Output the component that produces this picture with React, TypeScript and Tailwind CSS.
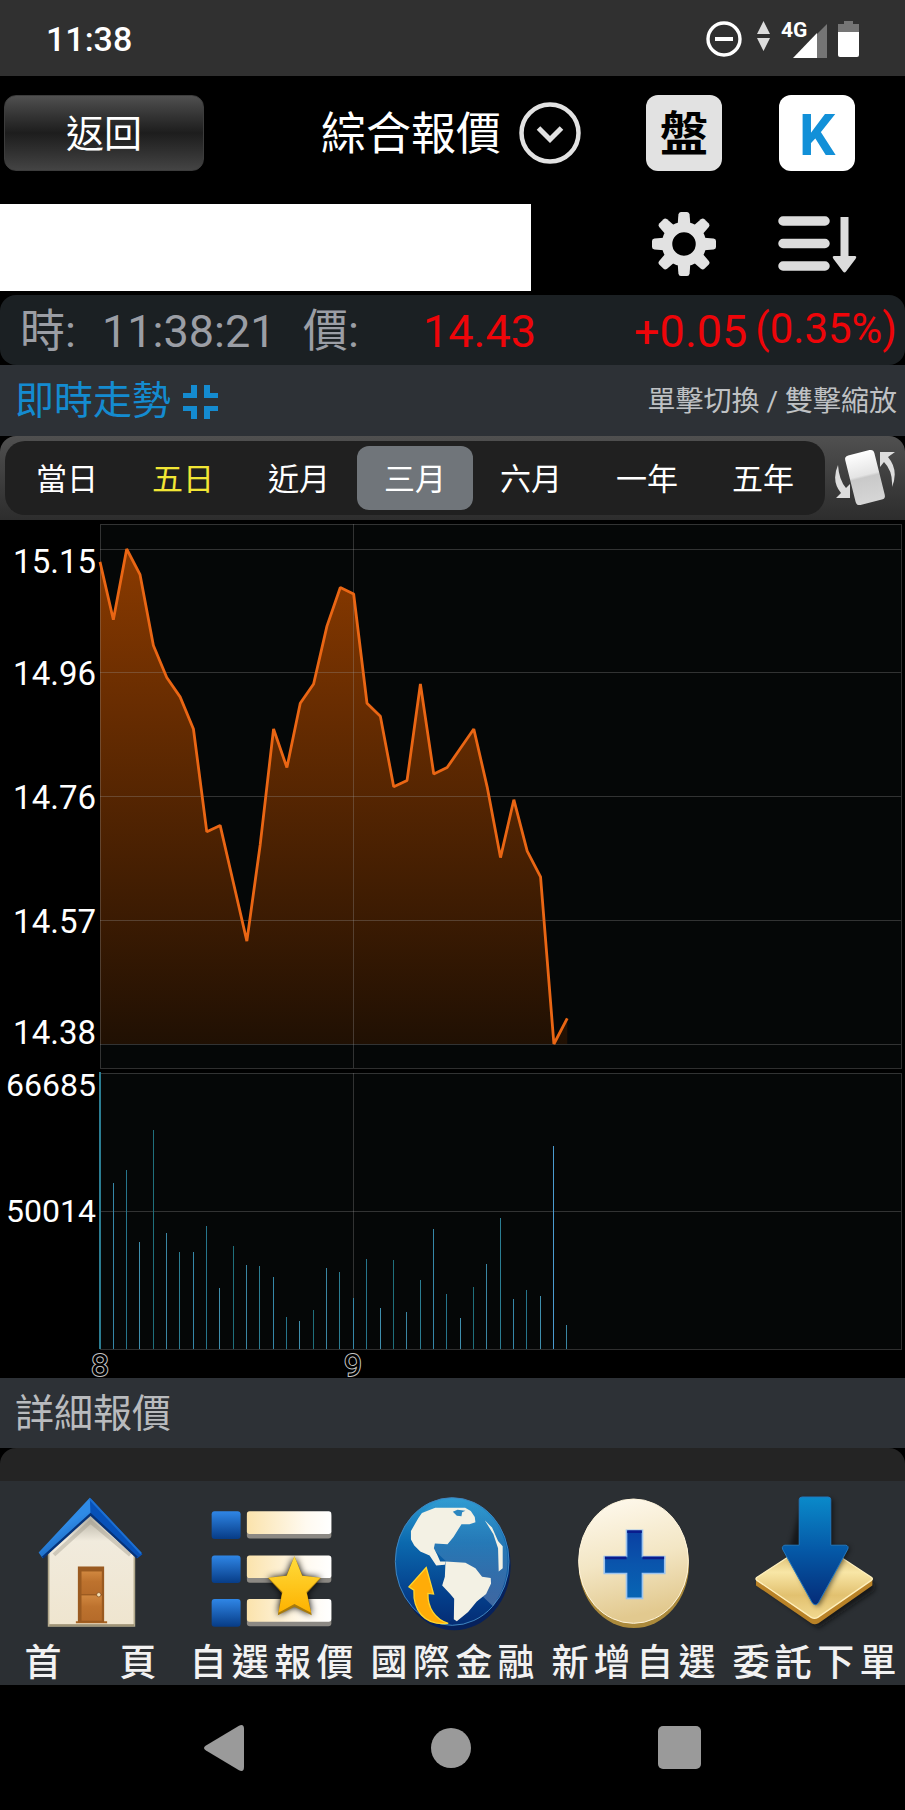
import { useState } from "react";

const PRICES = [
  15.13, 15.04, 15.15, 15.11, 15.0, 14.95, 14.92, 14.87, 14.71, 14.72, 14.63, 14.54,
  14.69, 14.87, 14.81, 14.91, 14.94, 15.03, 15.09, 15.08, 14.91, 14.89, 14.78, 14.79,
  14.94, 14.8, 14.81, 14.84, 14.87, 14.78, 14.67, 14.76, 14.68, 14.64, 14.38, 14.42,
];

// Bar heights above the volume baseline, in chart units.
const VOLUMES = [
  277, 166, 179, 107, 219, 116, 97, 97, 123, 61, 103, 84, 83, 72, 32, 28, 39, 81, 77, 51,
  90, 41, 89, 37, 69, 120, 55, 31, 62, 85, 131, 50, 59, 53, 203, 24,
];

const BAR_COLORS = ["#2b7d92", "#3587a8", "#26758c", "#3f8fae", "#1f6f7c", "#3a86a3"];
const barColor = (i: number) => (i === 34 ? "#4a9bd0" : BAR_COLORS[i % BAR_COLORS.length]);

const TABS = ["當日", "五日", "近月", "三月", "六月", "一年", "五年"];

const LEFT = 100;
const RIGHT = 901;
const STEP = 13.35;
const pointX = (i: number) => LEFT + STEP * i;
const priceY = (p: number) => 524 - ((p - 14.38) / 0.77) * 495;

function StatusBar() {
  return (
    <div className="flex h-[76px] items-center justify-between bg-[#303030] pt-0.5 pr-[46px] pl-[46px] text-white">
      <span className="text-[34px] leading-[40px] font-medium">11:38</span>
      <div className="flex items-center">
        <svg className="h-9 w-9" viewBox="0 0 36 36" fill="none" stroke="#fff">
          <circle cx="18" cy="18" r="16" strokeWidth="3.4" />
          <path d="M9 18h18" strokeWidth="4" />
        </svg>
        <svg className="ml-3.5 h-12 w-[72px]" viewBox="0 -6 72 48">
          <path d="M7.500 0 14 13H1ZM1 17H14L7.500 30Z" fill="#dcdcdc" />
          <path d="M71 3v34H61V13Z" fill="#757575" />
          <path d="M61 12v25H37Z" fill="#fff" />
          <text x="25" y="16" fill="#fff" fontSize="21" fontWeight="700" fontFamily="Roboto, sans-serif">
            4G
          </text>
        </svg>
        <svg className="ml-2.5 h-10 w-[21px]" viewBox="0 0 21 40">
          <path d="M6 2h9v3h6v9H0V5h6Z" fill="#757575" />
          <path d="M0 13h21v23q0 2-2 2H2q-2 0-2-2Z" fill="#fff" />
        </svg>
      </div>
    </div>
  );
}

function GearIcon() {
  return (
    <svg className="h-16 w-16 shrink-0" viewBox="-32 -32 64 64">
      {[0, 45, 90, 135, 180, 225, 270, 315].map((a) => (
        <path key={a} d="M-6.500-17-5.600-29.500q.4-2.500 2.500-2.500h6.200q2.100 0 2.500 2.500L6.500-17Z" fill="#e2e2e2" transform={`rotate(${a})`} />
      ))}
      <circle r="17" fill="none" stroke="#e2e2e2" strokeWidth="10.500" />
    </svg>
  );
}

function SortIcon() {
  return (
    <svg className="h-[60px] w-20 shrink-0" viewBox="0 0 80 60">
      <g stroke="#dcdcdc" strokeWidth="9.500" strokeLinecap="round">
        <path d="M6 7h42M6 29.500h42M6 52h42" />
      </g>
      <path d="M63.500 3h8v39h6q3 0 1 3L69 57.500q-1.500 2-3 0L56.500 45q-2-3 1-3h6Z" fill="#dcdcdc" />
    </svg>
  );
}

function Header() {
  return (
    <header className="flex flex-col gap-[33px] pt-[19px] pb-1">
      <div className="flex items-center pr-[50px] pl-1">
        <button className="h-[76px] w-[200px] rounded-xl border border-[#3c3c3c] bg-linear-to-b from-[#505050] via-[#1d1d1d] to-[#444444] pt-0.5 text-[38px] leading-none text-white">
          返回
        </button>
        <button className="mr-[65px] ml-auto flex items-center gap-[18px] text-[45px] leading-none text-white">
          <span className="pt-0.5">綜合報價</span>
          <svg className="h-[62px] w-[62px]" viewBox="0 0 62 62" fill="none" stroke="#e2e2e2" strokeWidth="4.500">
            <circle cx="31" cy="31" r="28.500" />
            <path d="M19.500 26 31 37.500 42.500 26" strokeWidth="5" />
          </svg>
        </button>
        <div className="flex gap-[57px]">
          <button className="h-[76px] w-[76px] rounded-xl bg-[#e2e2e2] pt-1 text-[48px] leading-none font-bold text-black">盤</button>
          <button className="h-[76px] w-[76px] rounded-xl bg-white pt-1 text-[57px] leading-none font-bold text-[#1290d8]">K</button>
        </div>
      </div>
      <div className="flex h-[87px] items-center justify-between pr-[50px]">
        <div className="h-full w-[531px] bg-white" />
        <div className="flex items-center gap-[57px] pb-[7px]">
          <button aria-label="設定" className="flex h-[76px] w-[76px] items-center justify-center">
            <GearIcon />
          </button>
          <button aria-label="排序" className="flex h-[76px] w-[76px] items-center justify-center">
            <SortIcon />
          </button>
        </div>
      </div>
    </header>
  );
}

function QuoteRow() {
  return (
    <div className="flex h-[70px] items-center rounded-2xl bg-[#1b2023] pt-0.5 pr-2 pl-5 text-[45px] leading-none text-[#9b9ea5]">
      <span className="w-[82px]">時:</span>
      <span className="w-[201px]">11:38:21</span>
      <span className="w-[120px]">價:</span>
      <span className="flex-1 text-[#ee0509]">14.43</span>
      <span className="text-[#ee0509]">+0.05</span>
      <span className="ml-2 pb-1 text-[42px] text-[#ee0509]">(0.35%)</span>
    </div>
  );
}

function TrendBar() {
  return (
    <div className="flex h-[71px] items-center justify-between bg-[#2d3136] pt-0.5 pr-2 pl-[15px]">
      <button className="flex items-center gap-3 text-[39px] leading-none text-[#148bd0]">
        即時走勢
        <svg className="h-[34px] w-[35px]" viewBox="0 0 35 34" fill="#148bd0">
          <path d="M8 0h6v13H0V8h8ZM21 0h6v8h8v5H21ZM0 21h14v13H8v-8H0ZM21 21h14v5h-8v8h-6Z" />
        </svg>
      </button>
      <span className="text-[28px] leading-none text-[#bfc1c4]">單擊切換 / 雙擊縮放</span>
    </div>
  );
}

function RotateIcon() {
  return (
    <svg className="h-[60px] w-16 shrink-0" viewBox="0 0 64 60">
      <defs>
        <linearGradient id="phone" x1="0" y1="0" x2="0" y2="1">
          <stop offset="0" stopColor="#fff" />
          <stop offset=".45" stopColor="#e4e4e4" />
          <stop offset=".5" stopColor="#c9c9c9" />
          <stop offset="1" stopColor="#d6d6d6" />
        </linearGradient>
      </defs>
      <path d="M5 17Q-2 33 8 45L3 50H17V36L13 40Q6 32 5 17Z" fill="#dedede" />
      <path d="M59 39Q66 22 55 9L62 4H47V19L51 14Q60 23 59 39Z" fill="#dedede" />
      <rect x="17" y="4" width="30" height="51" rx="4" fill="url(#phone)" transform="rotate(-14 32 29.500)" />
    </svg>
  );
}

function RangeTabs() {
  const [selected, setSelected] = useState("三月");
  return (
    <div className="flex h-[84px] items-center rounded-t-2xl bg-linear-to-b from-[#505050] to-[#2d2d2d] pr-2 pl-[5px]">
      <div className="flex h-[74px] flex-1 items-center rounded-[20px] bg-[#202020] px-1">
        {TABS.map((tab) => (
          <button
            key={tab}
            onClick={() => setSelected(tab)}
            className={`h-16 flex-1 rounded-xl pt-0.5 text-[31px] leading-none ${tab === "五日" ? "text-[#f2e635]" : "text-white"} ${tab === selected ? "bg-[#70757a]" : ""}`}
          >
            {tab}
          </button>
        ))}
      </div>
      <button aria-label="旋轉畫面" className="ml-2">
        <RotateIcon />
      </button>
    </div>
  );
}

function Chart() {
  const line = PRICES.map((p, i) => `${pointX(i)},${priceY(p)}`).join(" ");
  const end = pointX(PRICES.length - 1);
  const priceLabels: [string, number][] = [
    ["15.15", 53],
    ["14.96", 165],
    ["14.76", 289],
    ["14.57", 413],
    ["14.38", 524],
  ];
  return (
    <svg className="block w-full overflow-visible" viewBox="0 0 905 858" fontFamily="Roboto, sans-serif" role="img" aria-label="三月走勢圖">
      <defs>
        <linearGradient id="area" gradientUnits="userSpaceOnUse" x1="0" y1="29" x2="0" y2="524">
          <stop offset="0" stopColor="#8a3a00" />
          <stop offset="1" stopColor="#201003" />
        </linearGradient>
      </defs>
      <rect x={LEFT} y="4" width={RIGHT - LEFT} height="544" fill="#050707" />
      <rect x={LEFT} y="553" width={RIGHT - LEFT} height="276" fill="#050707" />
      <polygon points={`${LEFT},524 ${line} ${end},524`} fill="url(#area)" />
      <g stroke="#9a9a9a" strokeOpacity=".3" fill="none">
        <rect x="100.500" y="4.500" width="801" height="544" />
        <path d="M100 29.500H901M100 152.500H901M100 276.500H901M100 400.500H901M100 524.500H901" />
        <path d="M353.500 4V548M353.500 553V829" />
        <rect x="100.500" y="553.500" width="801" height="276" />
        <path d="M100 691.500H901" />
      </g>
      <polyline points={line} fill="none" stroke="#ea6614" strokeWidth="2.800" strokeLinejoin="bevel" />
      {VOLUMES.map((h, i) => (
        <rect key={i} x={Math.round(pointX(i) - 0.8)} y={829 - h} width={i === 0 ? 2 : 1} height={h} fill={barColor(i)} />
      ))}
      <g fill="#fff" textAnchor="end" fontSize="33">
        {priceLabels.map(([label, y]) => (
          <text key={label} x="96" y={y}>
            {label}
          </text>
        ))}
      </g>
      <g fill="#fff" textAnchor="end" fontSize="32">
        <text x="96" y="576">66685</text>
        <text x="96" y="702">50014</text>
      </g>
      <g fill="#000" stroke="#c4c4c4" strokeWidth="2" paintOrder="stroke" textAnchor="middle" fontSize="32">
        <text x="100" y="856">8</text>
        <text x="353" y="856">9</text>
      </g>
    </svg>
  );
}

function HomeIcon() {
  return (
    <svg className="h-[133px] w-[123px]" viewBox="85 375 370 400">
      <defs>
        <linearGradient id="wall" x1="0" y1="0" x2="0" y2="1">
          <stop offset="0" stopColor="#a9a598" />
          <stop offset=".25" stopColor="#f1ebdd" />
          <stop offset="1" stopColor="#efe5cf" />
        </linearGradient>
        <linearGradient id="roofL" x1="0" y1="0" x2="1" y2="1">
          <stop offset=".35" stopColor="#2f8be6" />
          <stop offset=".7" stopColor="#0b4fa6" />
        </linearGradient>
        <linearGradient id="door" x1="0" y1="0" x2="0" y2="1">
          <stop offset="0" stopColor="#d0873f" />
          <stop offset=".45" stopColor="#bd722e" />
          <stop offset="1" stopColor="#b56b2a" />
        </linearGradient>
      </defs>
      <path d="M144 540 270 425 402 540V766H144Z" fill="url(#wall)" stroke="#b3a98c" strokeWidth="5" />
      <path d="M160 552 270 452 390 552" fill="none" stroke="#8e897b" strokeOpacity=".35" strokeWidth="12" />
      <path d="M146 763H401" stroke="#94886b" strokeWidth="4" />
      <path d="M268 380 114 545 126 562 270 428 410 562 426 550Z" fill="url(#roofL)" />
      <path d="M268 380 426 550 410 562 270 428Z" fill="#0751b8" />
      <path d="M268 384 422 548" stroke="#1c6fd2" strokeWidth="6" />
      <path d="M126 560 270 430 410 560" fill="none" stroke="#063379" strokeWidth="7" />
      <path d="M226 752H320V758H226Z" fill="#a66323" />
      <rect x="232" y="587" width="79" height="168" fill="#9a5a20" />
      <rect x="243" y="602" width="61" height="68" fill="url(#door)" />
      <rect x="243" y="674" width="61" height="76" fill="url(#door)" />
      <circle cx="295" cy="672" r="6.500" fill="#f3dfb4" stroke="#7b4315" strokeWidth="2" />
    </svg>
  );
}

function ListIcon() {
  return (
    <svg className="h-[133px] w-[123px]" viewBox="630 375 370 400">
      <defs>
        <linearGradient id="blueBox" x1="0" y1="0" x2="0" y2="1">
          <stop offset="0" stopColor="#2f86e6" />
          <stop offset="1" stopColor="#073c86" />
        </linearGradient>
        <linearGradient id="bar">
          <stop offset="0" stopColor="#fbe3ac" />
          <stop offset=".7" stopColor="#fffaf0" />
          <stop offset="1" stopColor="#fff" />
        </linearGradient>
        <linearGradient id="star" x1="0" y1="0" x2="0" y2="1">
          <stop offset="0" stopColor="#ffdc3c" />
          <stop offset="1" stopColor="#fdb200" />
        </linearGradient>
        <filter id="soft" x="-30%" y="-30%" width="160%" height="160%">
          <feGaussianBlur stdDeviation="11" />
        </filter>
      </defs>
      {[421, 554, 685].map((y) => (
        <g key={y}>
          <rect x="635" y={y} width="87" height="83" rx="9" fill="url(#blueBox)" />
          <rect x="741" y={y + 5} width="254" height="77" rx="9" fill="#8c8984" />
          <rect x="741" y={y} width="254" height="68" rx="8" fill="url(#bar)" />
        </g>
      ))}
      <path d="M884 556 908 615 964 622 922 667 936 732 884 706 834 732 846 667 804 622 860 615Z" fill="#000" filter="url(#soft)" />
      <path d="M884 556 908 615 964 622 922 667 936 734 884 708 834 734 846 667 804 622 860 615Z" fill="#a77a0c" />
      <path d="M884 556 907 615 962 621 920 664 934 726 884 700 836 726 848 664 806 621 861 615Z" fill="url(#star)" />
    </svg>
  );
}

function GlobeIcon() {
  return (
    <svg className="h-[133px] w-[123px] overflow-visible" viewBox="152 195 370 400">
      <defs>
        <linearGradient id="sea" x1="0" y1="0" x2="0" y2="1">
          <stop offset="0" stopColor="#2d9bd2" />
          <stop offset=".35" stopColor="#0b69ae" />
          <stop offset=".75" stopColor="#04408c" />
          <stop offset="1" stopColor="#042c74" />
        </linearGradient>
        <linearGradient id="gloss" x1="0" y1="0" x2="0" y2="1">
          <stop offset="0" stopColor="#fff" stopOpacity=".02" />
          <stop offset="1" stopColor="#fff" stopOpacity=".24" />
        </linearGradient>
      </defs>
      <ellipse cx="342" cy="403" rx="170" ry="196" fill="#06215c" />
      <ellipse cx="336" cy="392" rx="171" ry="192" fill="url(#sea)" stroke="#3f86c0" strokeWidth="3" />
      <path d="M222 300 458 526C540 420 510 240 360 203 290 200 240 230 222 300Z" fill="url(#gloss)" />
      <path d="M245 246 285 230 375 230 392 240 404 258 406 274 388 280 364 280 340 318 322 340 284 338 281 352 291 372 300 392 316 392 314 402 288 404 268 374 240 362 222 344 212 326 212 300 234 262Z" fill="#f3f1e4" />
      <path d="M338 242 352 236 376 239 366 244 364 256 350 254Z" fill="#2b86bf" />
      <path d="M316 392 376 396 406 412 426 438 452 442 453 458 438 490 410 512 384 544 350 572 341 566 342 504 330 490 306 464 314 438Z" fill="#f3f1e4" />
      <path d="M434 268 456 290 474 330 488 346 488 412 476 422 474 352 460 310Z" fill="#f3f1e4" />
      <path d="M258 410 206 468 221 478C218 536 250 586 324 578 284 566 262 530 263 488L280 490Z" fill="#ffac08" stroke="#ffd52d" strokeWidth="4" />
    </svg>
  );
}

function AddIcon() {
  return (
    <svg className="h-[133px] w-[123px]" viewBox="698 195 370 400">
      <defs>
        <linearGradient id="coin" x1="0" y1="0" x2=".2" y2="1">
          <stop offset="0" stopColor="#fffaf0" />
          <stop offset=".55" stopColor="#f3e6c4" />
          <stop offset="1" stopColor="#e2c98f" />
        </linearGradient>
        <linearGradient id="plus" x1="0" y1="0" x2="0" y2="1">
          <stop offset="0" stopColor="#0a3fa2" />
          <stop offset=".5" stopColor="#0a55ac" />
          <stop offset="1" stopColor="#0765b4" />
        </linearGradient>
      </defs>
      <ellipse cx="884" cy="400" rx="166" ry="192" fill="#ab8a3c" />
      <ellipse cx="883" cy="391" rx="165" ry="187" fill="url(#coin)" stroke="#fff5dc" strokeWidth="3" />
      <path d="M862 298H910V377H977V428H910V503H862V428H795V377H862Z" fill="url(#plus)" stroke="#9cc4ee" strokeWidth="5" />
      <path d="M864 302H908M797 381H862M910 381H975" stroke="#0a1c8c" strokeWidth="8" />
    </svg>
  );
}

function OrderIcon() {
  return (
    <svg className="h-[133px] w-[123px] overflow-visible" viewBox="395 195 370 400">
      <defs>
        <linearGradient id="tile" x1="0" y1="0" x2="0" y2="1">
          <stop offset="0" stopColor="#c9a04c" />
          <stop offset=".4" stopColor="#f8e6a6" />
          <stop offset=".7" stopColor="#e2c170" />
          <stop offset="1" stopColor="#f1d88f" />
        </linearGradient>
        <linearGradient id="arrow" x1="0" y1="0" x2="0" y2="1">
          <stop offset="0" stopColor="#0a8aca" />
          <stop offset=".5" stopColor="#0558a6" />
          <stop offset="1" stopColor="#052c78" />
        </linearGradient>
        <filter id="shade" x="-20%" y="-20%" width="150%" height="150%">
          <feGaussianBlur stdDeviation="8" />
        </filter>
      </defs>
      <path d="M412 460 580 350 762 460 760 480 592 592Z" fill="#0b0d10" opacity=".7" filter="url(#shade)" />
      <path d="M404 442V464L570 578Q580 584 592 578L754 464V442L580 345Z" fill="#b98227" strokeLinejoin="round" />
      <path d="M406 440 568 335Q580 328 592 335L752 440Q756 444 752 448L590 560Q580 566 570 560L406 448Q402 444 406 440Z" fill="url(#tile)" stroke="#fff0bd" strokeWidth="4" />
      <path d="M545 204H629Q637 204 637 212V346H680Q692 348 684 360L598 520Q588 534 580 520L500 370Z" fill="#000" opacity=".5" filter="url(#shade)" />
      <path d="M543 198H621Q629 198 629 206V343H674Q684 345 680 355L592 516Q583 528 573 516L484 355Q481 345 491 343H534V206Q534 198 543 198Z" fill="url(#arrow)" stroke="#2377bd" strokeWidth="3" />
    </svg>
  );
}

const MENU = [
  { label: "首頁", icon: <HomeIcon />, width: "w-[132px]" },
  { label: "自選報價", icon: <ListIcon />, width: "w-[164px]" },
  { label: "國際金融", icon: <GlobeIcon />, width: "w-[164px]" },
  { label: "新增自選", icon: <AddIcon />, width: "w-[164px]" },
  { label: "委託下單", icon: <OrderIcon />, width: "w-[164px]" },
];

function BottomMenu() {
  return (
    <nav className="grid h-[204px] grid-cols-5 bg-[#2b2f33] pt-[15px]">
      {MENU.map((item) => (
        <a key={item.label} href="#" className="flex flex-col items-center gap-[15px] text-[#f2f2f2]">
          {item.icon}
          <span className={`${item.width} text-[37px] leading-[40px] font-medium [text-align-last:justify]`}>{item.label}</span>
        </a>
      ))}
    </nav>
  );
}

function SystemNav() {
  return (
    <div className="flex h-[125px] items-center justify-center gap-[187px] bg-black">
      <button aria-label="Back">
        <svg className="h-[46px] w-10" viewBox="0 0 40 46" fill="#9a9a9a">
          <path d="M35 .7Q40-1.500 40 4V42Q40 47.500 35 45.300L2 25.500Q-2 23 2 20.500Z" />
        </svg>
      </button>
      <button aria-label="Home" className="h-10 w-10 rounded-full bg-[#9a9a9a]" />
      <button aria-label="Recent apps" className="h-[43px] w-[43px] rounded-[5px] bg-[#9a9a9a]" />
    </div>
  );
}

export default function App() {
  return (
    <div className="min-h-screen bg-black font-[Roboto,'Noto_Sans_CJK_TC',sans-serif]">
      <StatusBar />
      <Header />
      <QuoteRow />
      <TrendBar />
      <RangeTabs />
      <Chart />
      <h2 className="flex h-[70px] items-center bg-[#2d3136] pt-0.5 pl-[15px] text-[39px] leading-none text-[#b9bbbe]">詳細報價</h2>
      <div className="h-[33px] rounded-t-2xl bg-[#242424]" />
      <BottomMenu />
      <SystemNav />
    </div>
  );
}
